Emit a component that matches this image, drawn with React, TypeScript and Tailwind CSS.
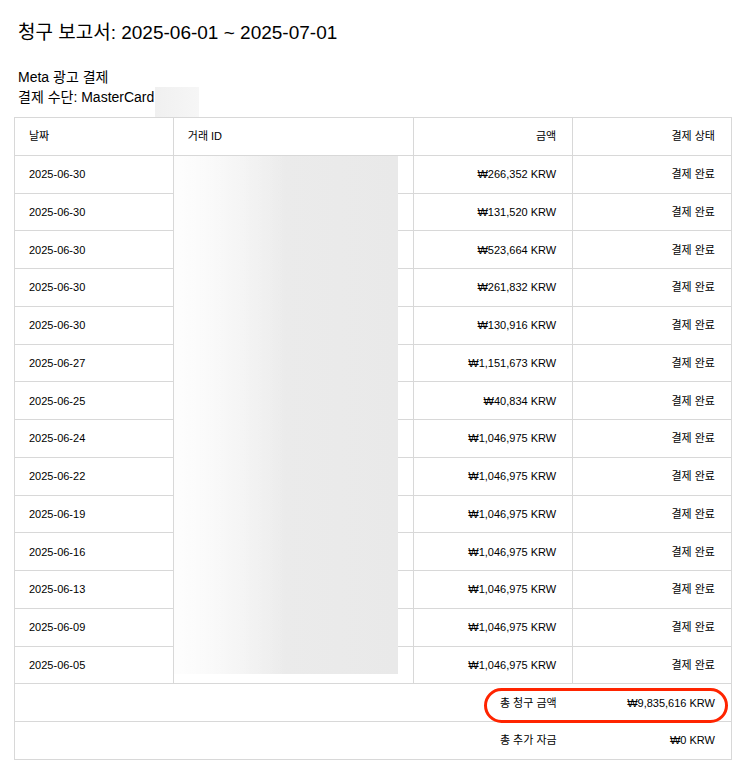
const rows: [string, string][] = [
  ['2025-06-30', '₩266,352 KRW'],
  ['2025-06-30', '₩131,520 KRW'],
  ['2025-06-30', '₩523,664 KRW'],
  ['2025-06-30', '₩261,832 KRW'],
  ['2025-06-30', '₩130,916 KRW'],
  ['2025-06-27', '₩1,151,673 KRW'],
  ['2025-06-25', '₩40,834 KRW'],
  ['2025-06-24', '₩1,046,975 KRW'],
  ['2025-06-22', '₩1,046,975 KRW'],
  ['2025-06-19', '₩1,046,975 KRW'],
  ['2025-06-16', '₩1,046,975 KRW'],
  ['2025-06-13', '₩1,046,975 KRW'],
  ['2025-06-09', '₩1,046,975 KRW'],
  ['2025-06-05', '₩1,046,975 KRW'],
];

const font = "font-['Liberation_Sans','Noto_Sans_CJK_KR',sans-serif]";
const cell = 'border border-[#d8d8d8]';

export default function App() {
  return (
    <div className={`${font} bg-white text-black w-[742px] h-[767px] overflow-hidden`}>
      <div className="px-[18px] pt-[20px]">
        <h1 className="text-[19px] leading-[26px]">청구 보고서: 2025-06-01 ~ 2025-07-01</h1>
        <div className="mt-[21px] text-[14px] leading-[20px]">
          <p>Meta 광고 결제</p>
          <p className="flex items-center">
            결제 수단: MasterCard
            <span className="relative inline-block ml-[1px] w-[44px] h-[30px] -mb-[10px] bg-gradient-to-r from-[#f0f0f0] to-[#f6f6f6]" />
          </p>
        </div>
      </div>

      <div className="relative mx-[14px] mt-[10px] w-[718px]">
        <table className="w-full border-collapse text-[11px] leading-[14px]">
          <colgroup>
            <col className="w-[159px]" />
            <col className="w-[241px]" />
            <col className="w-[159px]" />
            <col className="w-[159px]" />
          </colgroup>
          <thead>
            <tr className="h-[37.75px]">
              <th className={`${cell} font-normal text-left pl-[14px]`}>날짜</th>
              <th className={`${cell} font-normal text-left pl-[14px]`}>거래 ID</th>
              <th className={`${cell} font-normal text-right pr-[16px]`}>금액</th>
              <th className={`${cell} font-normal text-right pr-[16px]`}>결제 상태</th>
            </tr>
          </thead>
          <tbody>
            {rows.map(([date, amount], i) => (
              <tr key={i} className="h-[37.75px]">
                <td className={`${cell} pl-[14px]`}>{date}</td>
                <td className={cell}></td>
                <td className={`${cell} text-right pr-[16px]`}>{amount}</td>
                <td className={`${cell} text-right pr-[16px]`}>결제 완료</td>
              </tr>
            ))}
          </tbody>
          <tfoot>
            <tr className="h-[37.75px]">
              <td colSpan={3} className="border-y border-l border-[#d8d8d8] text-right pr-[16px]">총 청구 금액</td>
              <td className="border-y border-r border-[#d8d8d8] text-right pr-[16px]">₩9,835,616 KRW</td>
            </tr>
            <tr className="h-[37.75px]">
              <td colSpan={3} className="border-y border-l border-[#d8d8d8] text-right pr-[16px]">총 추가 자금</td>
              <td className="border-y border-r border-[#d8d8d8] text-right pr-[16px]">₩0 KRW</td>
            </tr>
          </tfoot>
        </table>

        {/* blurred transaction ids */}
        <div className="absolute left-[160px] top-[39px] w-[224px] h-[518px] bg-gradient-to-r from-[#fafafa] via-[#ebebeb] to-[#e9e9e9]" />
        <div className="absolute left-[160px] top-[39px] w-[224px] h-[518px] bg-gradient-to-r from-white/70 via-transparent to-transparent" />

        {/* highlight */}
        <div className="absolute left-[470px] top-[571px] w-[244px] h-[35px] border-[3px] border-[#ff2400] rounded-full" />
      </div>
    </div>
  );
}
